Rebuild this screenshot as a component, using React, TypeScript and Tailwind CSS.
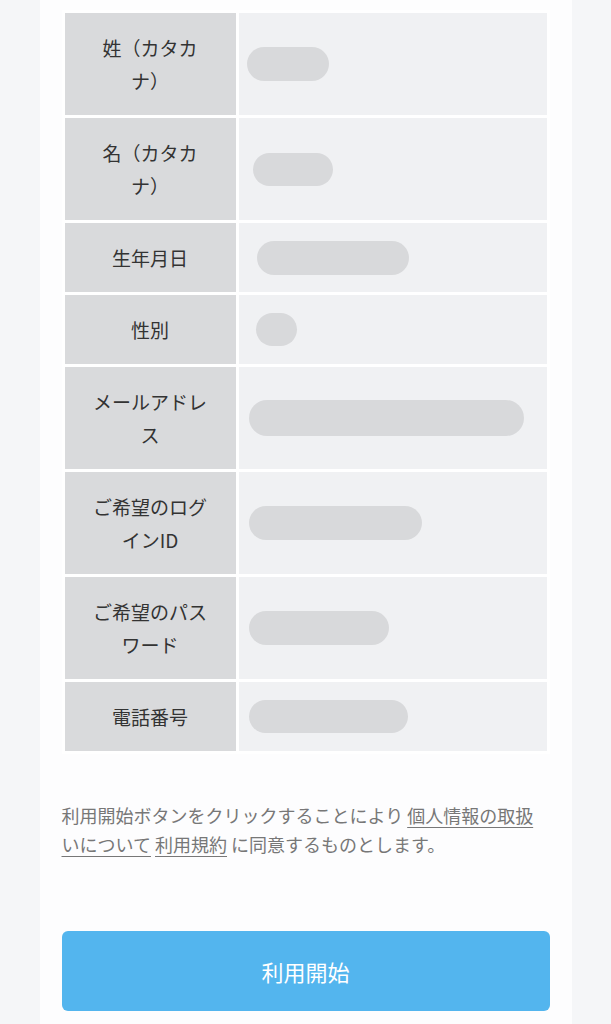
import React from 'react';

interface Row {
  label: string;
  blob: { ml: string; w: string; h: string };
}

const rows: Row[] = [
  { label: '姓（カタカナ）', blob: { ml: 'ml-[8px]', w: 'w-[82px]', h: 'h-[34px]' } },
  { label: '名（カタカナ）', blob: { ml: 'ml-[14px]', w: 'w-[80px]', h: 'h-[33px]' } },
  { label: '生年月日', blob: { ml: 'ml-[18px]', w: 'w-[152px]', h: 'h-[34px]' } },
  { label: '性別', blob: { ml: 'ml-[17px]', w: 'w-[41px]', h: 'h-[33px]' } },
  { label: 'メールアドレス', blob: { ml: 'ml-[10px]', w: 'w-[275px]', h: 'h-[36px]' } },
  { label: 'ご希望のログインID', blob: { ml: 'ml-[10px]', w: 'w-[173px]', h: 'h-[34px]' } },
  { label: 'ご希望のパスワード', blob: { ml: 'ml-[10px]', w: 'w-[140px]', h: 'h-[34px]' } },
  { label: '電話番号', blob: { ml: 'ml-[10px]', w: 'w-[159px]', h: 'h-[33px]' } },
];

export default function App() {
  return (
    <div
      className="min-h-screen bg-[#f5f6f8] flex justify-center"
      style={{ fontFamily: '"Noto Sans CJK JP", "Noto Sans", sans-serif' }}
    >
      <div className="w-[532px] bg-[#fdfdfe] px-[22px] pt-[10px] pb-[12px]">
        <table className="w-full border-separate border-spacing-[3px] bg-white">
          <tbody>
            {rows.map((r) => (
              <tr key={r.label}>
                <td className="w-[171px] bg-[#d9dadc] px-[24px] py-[18px] text-center text-[19px] leading-[33px] text-[#333]">
                  {r.label}
                </td>
                <td className="bg-[#f0f1f3] align-middle">
                  {/* redacted value */}
                  <div className={`${r.blob.ml} ${r.blob.w} ${r.blob.h} rounded-full bg-[#d8d9db]`} />
                </td>
              </tr>
            ))}
          </tbody>
        </table>

        <p className="mt-[47px] text-[18px] leading-[29px] text-[#777]">
          <span>利用開始ボタンをクリックすることにより </span>
          <span className="underline underline-offset-[4px]">個人情報の取扱</span>
          <br />
          <span className="underline underline-offset-[4px]">いについて</span>{' '}
          <span className="underline underline-offset-[4px]">利用規約</span>
          <span> に同意するものとします。</span>
        </p>

        <button className="mt-[72px] w-full h-[80px] rounded-[6px] bg-[#53b5ee] text-white text-[22px]">
          利用開始
        </button>
      </div>
    </div>
  );
}
